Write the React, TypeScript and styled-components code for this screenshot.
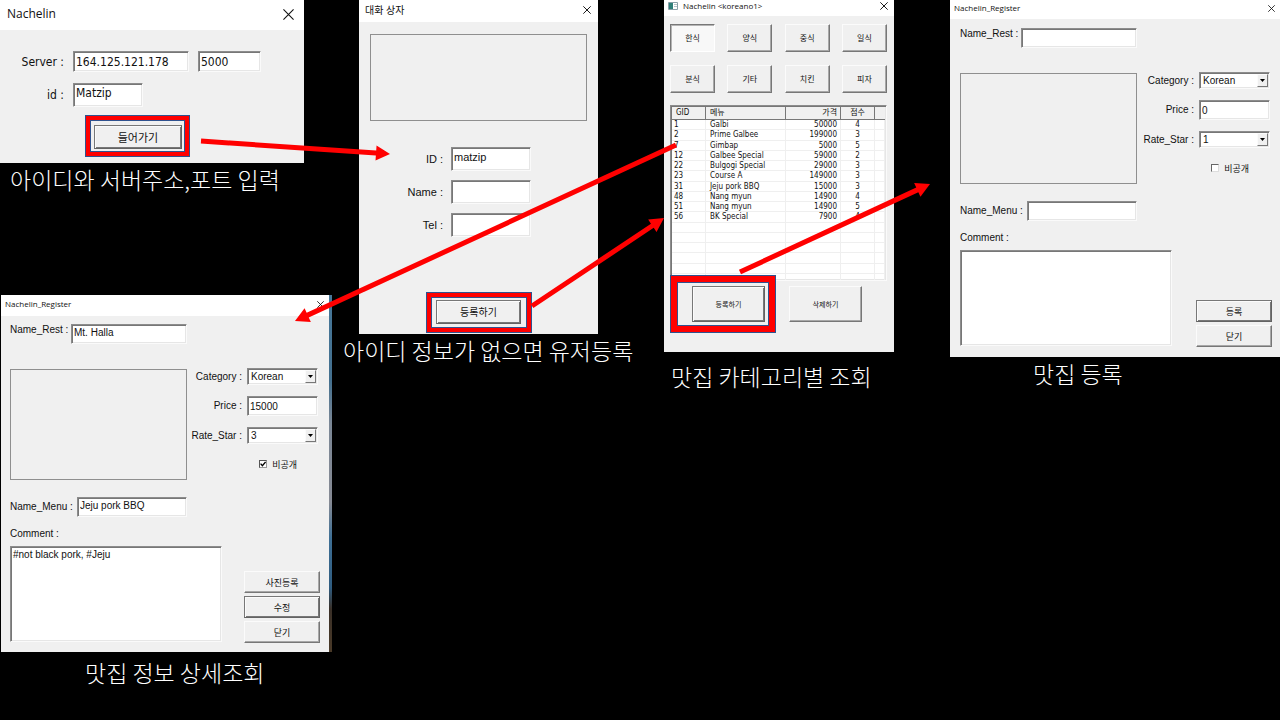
import React from "react";
import styled, { createGlobalStyle, css } from "styled-components";

const korean = `"Noto Sans CJK KR", sans-serif`;
const tahoma = `"DejaVu Sans Condensed", "DejaVu Sans", ${korean}`;
const arial = `"Liberation Sans", ${korean}`;
const titleFont = `"Open Sans", ${korean}`;

const GlobalStyle = createGlobalStyle`
  *, *::before, *::after { box-sizing: border-box; }
  body { margin: 0; background: #000; color: #111; }
  button, input, select, textarea { font: inherit; color: inherit; margin: 0; border-radius: 0; }
`;

const Slide = styled.main`
  position: relative;
  min-height: 100vh;
  display: grid;
  grid-template-columns: 332fr 318fr 248fr 382fr;
  align-items: start;
`;

const Step = styled.section<{ $pad?: string }>`
  min-width: 0;
  padding: ${(p) => p.$pad ?? "0"};
`;

const Caption = styled.h2<{ $indent: number; $above?: number }>`
  margin: ${(p) => p.$above ?? 0}px 0 0;
  padding-left: ${(p) => p.$indent}px;
  font: 300 23px/32px ${korean};
  color: #fff;
  white-space: nowrap;
`;

const Window = styled.article<{ $font: string; $size: number; $margin?: string }>`
  margin: ${(p) => p.$margin ?? "0"};
  background: #f0f0f0;
  font-family: ${(p) => p.$font};
  font-size: ${(p) => p.$size}px;
`;

const TitleBar = styled.header<{ $height: number; $size: number; $pad: string }>`
  display: flex;
  align-items: center;
  gap: 5px;
  height: ${(p) => p.$height}px;
  padding: ${(p) => p.$pad};
  background: #fff;
  font-family: ${titleFont};
  font-size: ${(p) => p.$size}px;
  line-height: 1;
`;

const Title = styled.h1`
  flex: 1;
  margin: 0;
  font: inherit;
  white-space: nowrap;
`;

const CloseButton = styled.button<{ $size: number }>`
  display: flex;
  padding: 0;
  border: 0;
  background: none;
  svg { width: ${(p) => p.$size}px; height: ${(p) => p.$size}px; }
`;

const Body = styled.div<{ $pad: string }>`
  display: flex;
  flex-direction: column;
  padding: ${(p) => p.$pad};
`;

const FieldRow = styled.div<{ $gap: number; $above?: number; $align?: string }>`
  display: flex;
  align-items: ${(p) => p.$align ?? "center"};
  gap: ${(p) => p.$gap}px;
  margin-top: ${(p) => p.$above ?? 0}px;
`;

const FrameRow = styled.div<{ $indent: number; $above: number }>`
  margin-top: ${(p) => p.$above}px;
  padding-left: ${(p) => p.$indent}px;
`;

const Label = styled.label<{ $width?: number; $right?: boolean }>`
  flex: none;
  width: ${(p) => (p.$width ? `${p.$width}px` : "auto")};
  line-height: 12px;
  text-align: ${(p) => (p.$right ? "right" : "left")};
  white-space: nowrap;
`;

const sunken = css`
  border: 1px solid;
  border-color: #8c8c8c #fafafa #fafafa #8c8c8c;
  box-shadow: inset 1px 1px #777, inset -1px -1px #e6e6e6;
  background: #fff;
  outline: none;
`;

const TextBox = styled.input<{ $width?: number; $height: number; $high?: boolean }>`
  ${sunken}
  flex: ${(p) => (p.$width ? "none" : "1")};
  width: ${(p) => (p.$width ? `${p.$width}px` : "auto")};
  min-width: 0;
  height: ${(p) => p.$height}px;
  padding: ${(p) => (p.$high ? "0 2px 4px" : "0 2px")};
`;

const CommentBox = styled.textarea`
  ${sunken}
  width: 212px;
  height: 96px;
  padding: 2px;
  line-height: 12px;
  resize: none;
`;

const Picture = styled.div<{ $height: number }>`
  height: ${(p) => p.$height}px;
  border: 1px solid #8f8f8f;
`;

const PushButton = styled.button<{ $width?: number; $height?: number; $primary?: boolean; $pressed?: boolean; $size?: number }>`
  width: ${(p) => (p.$width ? `${p.$width}px` : "100%")};
  height: ${(p) => (p.$height ? `${p.$height}px` : "100%")};
  padding: 0;
  font-family: ${korean};
  font-size: ${(p) => p.$size ?? 9}px;
  line-height: 1;
  background: #f0f0f0;
  border: 1px solid;
  border-color: #fbfbfb #777 #777 #fbfbfb;
  box-shadow: inset -1px -1px #a8a8a8;
  ${(p) =>
    p.$primary &&
    css`
      border-color: #777 #636363 #636363 #777;
      box-shadow: inset 1px 1px #fbfbfb, inset -1px -1px #777;
    `}
  ${(p) =>
    p.$pressed &&
    css`
      background: #f8f8f8;
      border-color: #777 #fff #fff #777;
      box-shadow: inset 1px 1px #b4b4b4;
    `}
`;

const Highlight = styled.div<{ $width: number; $height: number; $thick: number; $pad: string }>`
  position: relative;
  flex: none;
  width: ${(p) => p.$width}px;
  height: ${(p) => p.$height}px;
  padding: ${(p) => p.$pad};
  border: ${(p) => p.$thick}px solid #f00;
  outline: 1px solid #2f528f;
  outline-offset: -1px;
  box-shadow: inset 0 0 0 1px #2f528f;
  background: #f0f0f0;
`;

const CategoryGrid = styled.div`
  display: grid;
  grid-template-columns: repeat(4, 45px);
  justify-content: space-between;
  row-gap: 13px;
`;

const ListFrame = styled.div`
  ${sunken}
  height: 176px;
  margin-top: 12px;
  padding: 1px;
  overflow: hidden;
`;

const MenuTable = styled.table`
  width: 100%;
  height: 177px;
  table-layout: fixed;
  border-collapse: separate;
  border-spacing: 0;
  font-size: 8px;
  line-height: 9px;

  th, td {
    padding: 0 4px;
    text-align: left;
    font-weight: normal;
    white-space: nowrap;
  }
  th {
    height: 13px;
    line-height: 12px;
    background: #f0f0f0;
    border-right: 1px solid #777;
    border-bottom: 1px solid #777;
  }
  td {
    height: 10px;
    border-right: 1px solid #efefef;
    border-bottom: 1px solid #efefef;
  }
  td:first-child { padding-left: 2px; }
  th:nth-child(3), td:nth-child(3) { text-align: right; padding-right: 3px; }
  th:nth-child(4), td:nth-child(4) { text-align: center; }
  th:last-child { border-right: 0; }
`;

const ActionRow = styled.div`
  display: flex;
  align-items: center;
  gap: 13px;
  margin-top: -6px;
`;

const NameFields = styled.div<{ $above?: number }>`
  width: 177px;
  margin-top: ${(p) => p.$above ?? 0}px;
`;

const Details = styled.div`
  display: flex;
  justify-content: space-between;
  margin-top: 24px;
  padding-right: 2px;
`;

const DetailPicture = styled(Picture)`
  width: 177px;
  margin-top: 1px;
`;

const DetailFields = styled.div`
  display: flex;
  flex-direction: column;
  align-items: flex-end;
  gap: 11px;
`;

const SelectBox = styled.div`
  ${sunken}
  display: grid;
  grid-template-columns: 1fr 11px;
  width: 71px;
  height: 17px;
  padding: 1px;

  select {
    grid-area: 1 / 1 / 2 / 3;
    min-width: 0;
    padding: 0 2px;
    border: 0;
    background: none;
    appearance: none;
    outline: none;
  }
`;

const DropMark = styled.span`
  grid-area: 1 / 2;
  display: grid;
  place-items: center;
  background: #f0f0f0;
  border: 1px solid;
  border-color: #fbfbfb #777 #777 #fbfbfb;
  pointer-events: none;
`;

const PrivateCheck = styled.label`
  display: flex;
  align-items: center;
  gap: 5px;
  height: 18px;
  padding-right: 21px;
  font-family: ${korean};
  font-size: 9px;
  line-height: 1;

  input {
    appearance: none;
    width: 8px;
    height: 8px;
    background: #fff;
    border: 1px solid;
    border-color: #666 #ddd #ddd #666;
  }
  input:checked {
    border-color: #555 #999 #999 #555;
    background: #fff url("data:image/svg+xml,%3Csvg xmlns='http://www.w3.org/2000/svg' viewBox='0 0 6 6'%3E%3Cpath d='M.6 2.6L2.4 4.6 5.6 1' fill='none' stroke='%23000' stroke-width='1.4'/%3E%3C/svg%3E");
  }
`;

const CommentRow = styled.div`
  display: flex;
  justify-content: space-between;
  height: 97px;
  margin-top: 6px;
`;

const ButtonStack = styled.div`
  display: flex;
  flex-direction: column;
  justify-content: flex-end;
  gap: 3px;
`;

const DesktopEdge = styled.div`
  margin-top: 100px;
  padding: 0 3px 0 1px;
  background:
    linear-gradient(#47789a, #44708f 24%, #7b8796 36%, #868a94 58%, #3f7096 68%, #2f5c80 82%, #3a3028 88%, #4a3a28)
    right / 3px 100% no-repeat;
`;

const Arrows = styled.svg`
  position: absolute;
  top: 0;
  left: 0;
  width: 100%;
  height: 720px;
  pointer-events: none;
`;

function Close({ size }: { size: number }) {
  return (
    <CloseButton $size={size} type="button" aria-label="Close">
      <svg viewBox="0 0 10 10" fill="none" stroke="#111" strokeWidth={size > 8 ? 1 : 1.2}>
        <path d="M.4.4l9.2 9.2M9.6.4L.4 9.6" />
      </svg>
    </CloseButton>
  );
}

function Arrow({ from, to }: { from: [number, number]; to: [number, number] }) {
  const dx = to[0] - from[0];
  const dy = to[1] - from[1];
  const length = Math.hypot(dx, dy);
  const angle = (Math.atan2(dy, dx) * 180) / Math.PI;
  return (
    <g transform={`translate(${from[0]} ${from[1]}) rotate(${angle})`} fill="#f00">
      <path d={`M0-2.5H${length - 14}V-7.5L${length} 0 ${length - 14} 7.5V2.5H0z`} />
    </g>
  );
}

function Choice({ id, value, options }: { id: string; value: string; options: string[] }) {
  return (
    <SelectBox>
      <select id={id} defaultValue={value}>
        {options.map((o) => (
          <option key={o}>{o}</option>
        ))}
      </select>
      <DropMark>
        <svg width="5" height="3" viewBox="0 0 5 3"><path d="M0 0h5L2.5 3z" /></svg>
      </DropMark>
    </SelectBox>
  );
}

interface RegisterProps {
  id: string;
  titleHeight: number;
  pad: string;
  rest?: string;
  price: string;
  star: string;
  hidden?: boolean;
  menu?: string;
  comment?: string;
  actions: { text: string; primary?: boolean }[];
}

function RegisterWindow({ id, titleHeight, pad, rest, price, star, hidden, menu, comment, actions }: RegisterProps) {
  return (
    <Window $font={arial} $size={10}>
      <TitleBar $height={titleHeight} $size={8} $pad="0 5px 3px 4px">
        <Title>Nachelin_Register</Title>
        <Close size={7} />
      </TitleBar>
      <Body $pad={pad}>
        <NameFields>
          <FieldRow $gap={0} $align="flex-start">
            <Label $width={61} htmlFor={`${id}-rest`}>Name_Rest :</Label>
            <TextBox id={`${id}-rest`} $height={20} $high defaultValue={rest} />
          </FieldRow>
        </NameFields>
        <Details>
          <DetailPicture $height={111} />
          <DetailFields>
            <FieldRow $gap={5}>
              <Label htmlFor={`${id}-category`}>Category :</Label>
              <Choice id={`${id}-category`} value="Korean" options={["Korean", "Western", "Chinese", "Japanese"]} />
            </FieldRow>
            <FieldRow $gap={5}>
              <Label htmlFor={`${id}-price`}>Price :</Label>
              <TextBox id={`${id}-price`} $width={71} $height={20} defaultValue={price} />
            </FieldRow>
            <FieldRow $gap={5}>
              <Label htmlFor={`${id}-star`}>Rate_Star :</Label>
              <Choice id={`${id}-star`} value={star} options={["1", "2", "3", "4", "5"]} />
            </FieldRow>
            <PrivateCheck>
              <input type="checkbox" defaultChecked={hidden} />
              비공개
            </PrivateCheck>
          </DetailFields>
        </Details>
        <NameFields $above={17}>
          <FieldRow $gap={0}>
            <Label $width={67} htmlFor={`${id}-menu`}>Name_Menu :</Label>
            <TextBox id={`${id}-menu`} $height={20} $high defaultValue={menu} />
          </FieldRow>
        </NameFields>
        <FieldRow $gap={0} $above={11}>
          <Label htmlFor={`${id}-comment`}>Comment :</Label>
        </FieldRow>
        <CommentRow>
          <CommentBox id={`${id}-comment`} defaultValue={comment} />
          <ButtonStack>
            {actions.map((a) => (
              <PushButton key={a.text} type="button" $width={76} $height={22} $primary={a.primary}>
                {a.text}
              </PushButton>
            ))}
          </ButtonStack>
        </CommentRow>
      </Body>
    </Window>
  );
}

const categories = ["한식", "양식", "중식", "일식", "분식", "기타", "치킨", "피자"];

const menus = [
  ["1", "Galbi", "50000", "4"],
  ["2", "Prime Galbee", "199000", "3"],
  ["7", "Gimbap", "5000", "5"],
  ["12", "Galbee Special", "59000", "2"],
  ["22", "Bulgogi Special", "29000", "3"],
  ["23", "Course A", "149000", "3"],
  ["31", "Jeju pork BBQ", "15000", "3"],
  ["48", "Nang myun", "14900", "4"],
  ["51", "Nang myun", "14900", "5"],
  ["56", "BK Special", "7900", "4"],
  ...Array.from({ length: 6 }, () => ["", "", "", ""]),
];

export default function App() {
  return (
    <>
      <GlobalStyle />
      <Slide>
        <Step>
          <Window $font={tahoma} $size={12} $margin="0 28px 0 0">
            <TitleBar $height={30} $size={12} $pad="0 10px 2px 7px">
              <Title>Nachelin</Title>
              <Close size={11} />
            </TitleBar>
            <Body $pad="21px 0 6px">
              <FieldRow $gap={9}>
                <Label $width={64} $right htmlFor="server">Server :</Label>
                <TextBox id="server" $width={116} $height={21} defaultValue="164.125.121.178" />
                <TextBox aria-label="Port" $width={63} $height={21} defaultValue="5000" />
              </FieldRow>
              <FieldRow $gap={9} $above={11}>
                <Label $width={64} $right htmlFor="user">id :</Label>
                <TextBox id="user" $width={70} $height={24} $high defaultValue="Matzip" />
              </FieldRow>
              <FrameRow $indent={85} $above={8}>
                <Highlight $width={105} $height={42} $thick={5} $pad="5px 3px 3px 4px">
                  <PushButton type="button" $primary $size={11}>들어가기</PushButton>
                </Highlight>
              </FrameRow>
            </Body>
          </Window>
          <Caption $indent={10}>아이디와 서버주소,포트 입력</Caption>

          <DesktopEdge>
            <RegisterWindow
              id="detail"
              titleHeight={21}
              pad="8px 9px 9px"
              rest="Mt. Halla"
              price="15000"
              star="3"
              hidden
              menu="Jeju pork BBQ"
              comment="#not black pork, #Jeju"
              actions={[{ text: "사진등록" }, { text: "수정", primary: true }, { text: "닫기" }]}
            />
          </DesktopEdge>
          <Caption $indent={85} $above={4}>맛집 정보 상세조회</Caption>
        </Step>

        <Step $pad="0 0 0 11px">
          <Window $font={arial} $size={11} $margin="0 52px 0 16px">
            <TitleBar $height={22} $size={10} $pad="0 7px 2px 6px">
              <Title>대화 상자</Title>
              <Close size={8} />
            </TitleBar>
            <Body $pad="12px 11px 1px">
              <Picture $height={87} />
              <FieldRow $gap={8} $above={26}>
                <Label $width={73} $right htmlFor="new-id">ID :</Label>
                <TextBox id="new-id" $width={80} $height={24} $high defaultValue="matzip" />
              </FieldRow>
              <FieldRow $gap={8} $above={9}>
                <Label $width={73} $right htmlFor="new-name">Name :</Label>
                <TextBox id="new-name" $width={80} $height={24} />
              </FieldRow>
              <FieldRow $gap={8} $above={9}>
                <Label $width={73} $right htmlFor="new-tel">Tel :</Label>
                <TextBox id="new-tel" $width={80} $height={24} />
              </FieldRow>
              <FrameRow $indent={56} $above={55}>
                <Highlight $width={106} $height={41} $thick={5} $pad="3px 6px 4px 5px">
                  <PushButton type="button" $primary $size={10}>등록하기</PushButton>
                </Highlight>
              </FrameRow>
            </Body>
          </Window>
          <Caption $indent={0}>아이디 정보가 없으면 유저등록</Caption>
        </Step>

        <Step $pad="0 4px 0 14px">
          <Window $font={tahoma} $size={8}>
            <TitleBar $height={16} $size={8} $pad="0 6px 4px 4px">
              <svg width="10" height="8" viewBox="0 0 10 8" aria-hidden="true">
                <path fill="#fff" stroke="#8aa0a8" d="M.5.5h9v7h-9z" />
                <path fill="#2f7f78" d="M1 1h4v6H1z" />
                <path fill="#b8c4c8" d="M6 2h3v1H6zM6 4h3v1H6z" />
              </svg>
              <Title>Nachelin &lt;koreano1&gt;</Title>
              <Close size={8} />
            </TitleBar>
            <Body $pad="8px 7px 19px 6px">
              <CategoryGrid>
                {categories.map((c, i) => (
                  <PushButton key={c} type="button" $height={28} $size={8} $pressed={i === 0}>{c}</PushButton>
                ))}
              </CategoryGrid>
              <ListFrame>
                <MenuTable>
                  <colgroup>
                    <col width="34" />
                    <col />
                    <col width="55" />
                    <col width="34" />
                    <col width="10" />
                  </colgroup>
                  <thead>
                    <tr><th>GID</th><th>메뉴</th><th>가격</th><th>점수</th><th /></tr>
                  </thead>
                  <tbody>
                    {menus.map((row, i) => (
                      <tr key={i}>
                        {row.map((cell, j) => (
                          <td key={j}>{cell || "\u00a0"}</td>
                        ))}
                        <td />
                      </tr>
                    ))}
                  </tbody>
                </MenuTable>
              </ListFrame>
              <ActionRow>
                <Highlight $width={106} $height={58} $thick={7} $pad="4px 4px 4px 15px">
                  <PushButton type="button" $primary $size={7}>등록하기</PushButton>
                </Highlight>
                <PushButton type="button" $width={73} $height={36} $size={7}>삭제하기</PushButton>
              </ActionRow>
            </Body>
          </Window>
          <Caption $indent={7} $above={8}>맛집 카테고리별 조회</Caption>
        </Step>

        <Step $pad="0 0 0 52px">
          <RegisterWindow
            id="register"
            titleHeight={19}
            pad="9px 8px 10px 10px"
            price="0"
            star="1"
            actions={[{ text: "등록", primary: true }, { text: "닫기" }]}
          />
          <Caption $indent={83}>맛집 등록</Caption>
        </Step>

        <Arrows viewBox="0 0 1280 720" preserveAspectRatio="none" aria-hidden="true">
          <Arrow from={[201, 141]} to={[390, 154]} />
          <Arrow from={[676, 145]} to={[295, 321]} />
          <Arrow from={[532, 306]} to={[664, 218]} />
          <Arrow from={[740, 272]} to={[930, 184]} />
        </Arrows>
      </Slide>
    </>
  );
}
